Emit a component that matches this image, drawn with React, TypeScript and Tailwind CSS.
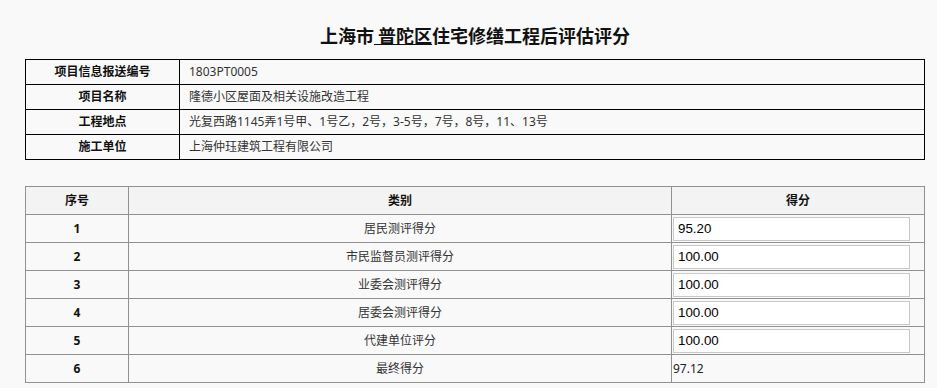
import React from "react";

const info = [
  ["项目信息报送编号", "1803PT0005"],
  ["项目名称", "隆德小区屋面及相关设施改造工程"],
  ["工程地点", "光复西路1145弄1号甲、1号乙，2号，3-5号，7号，8号，11、13号"],
  ["施工单位", "上海仲珏建筑工程有限公司"],
];

const scores: [string, string, string | null, string | null][] = [
  ["1", "居民测评得分", "95.20", null],
  ["2", "市民监督员测评得分", "100.00", null],
  ["3", "业委会测评得分", "100.00", null],
  ["4", "居委会测评得分", "100.00", null],
  ["5", "代建单位评分", "100.00", null],
  ["6", "最终得分", null, "97.12"],
];

export default function App() {
  return (
    <div
      className="min-h-[388px] w-full bg-[#f9f9f9] text-[12px] text-[#333]"
      style={{ fontFamily: '"Noto Sans", "Noto Sans CJK SC", sans-serif' }}
    >
      <div className="ml-[25px] w-[900px] pt-[20px]">
        <h1
          className="text-center text-[18px] font-bold leading-[30px] text-[#111]"
          style={{ fontFamily: '"Noto Sans CJK SC", sans-serif' }}
        >
          上海市<span className="underline decoration-1 underline-offset-[1px]">&nbsp;普陀区</span>住宅修缮工程后评估评分
        </h1>

        <div className="mt-[9px] border-x border-t border-black">
          {info.map(([k, v]) => (
            <div key={k} className="flex h-[25px] border-b border-black">
              <div className="flex w-[154px] shrink-0 items-center justify-center border-r border-black font-bold text-[#111]">
                {k}
              </div>
              <div className="flex flex-1 items-center pl-[9px]">{v}</div>
            </div>
          ))}
        </div>

        <div className="mt-[26px] border-x border-t border-[#919191]">
          <div className="flex h-[28px] border-b border-[#919191] bg-[#f3f3f3] font-bold text-[#111]">
            <div className="flex w-[103px] shrink-0 items-center justify-center border-r border-[#919191]">序号</div>
            <div className="flex w-[543px] shrink-0 items-center justify-center border-r border-[#919191]">类别</div>
            <div className="flex flex-1 items-center justify-center">得分</div>
          </div>
          {scores.map(([n, name, val, txt]) => (
            <div key={n} className="flex h-[28px] border-b border-[#919191]">
              <div className="flex w-[103px] shrink-0 items-center justify-center border-r border-[#919191] font-bold text-[#111]">
                {n}
              </div>
              <div className="flex w-[543px] shrink-0 items-center justify-center border-r border-[#919191]">{name}</div>
              <div className="flex flex-1 items-center pl-[1px]">
                {val !== null ? (
                  <input
                    readOnly
                    value={val}
                    className="h-[24px] w-[237px] border border-[#c8c8c8] bg-white pl-[4px] text-[13.333px] text-black outline-none"
                    style={{ fontFamily: '"Liberation Sans", Arial, sans-serif' }}
                  />
                ) : (
                  <span className="text-[#222]">{txt}</span>
                )}
              </div>
            </div>
          ))}
        </div>
      </div>
    </div>
  );
}
